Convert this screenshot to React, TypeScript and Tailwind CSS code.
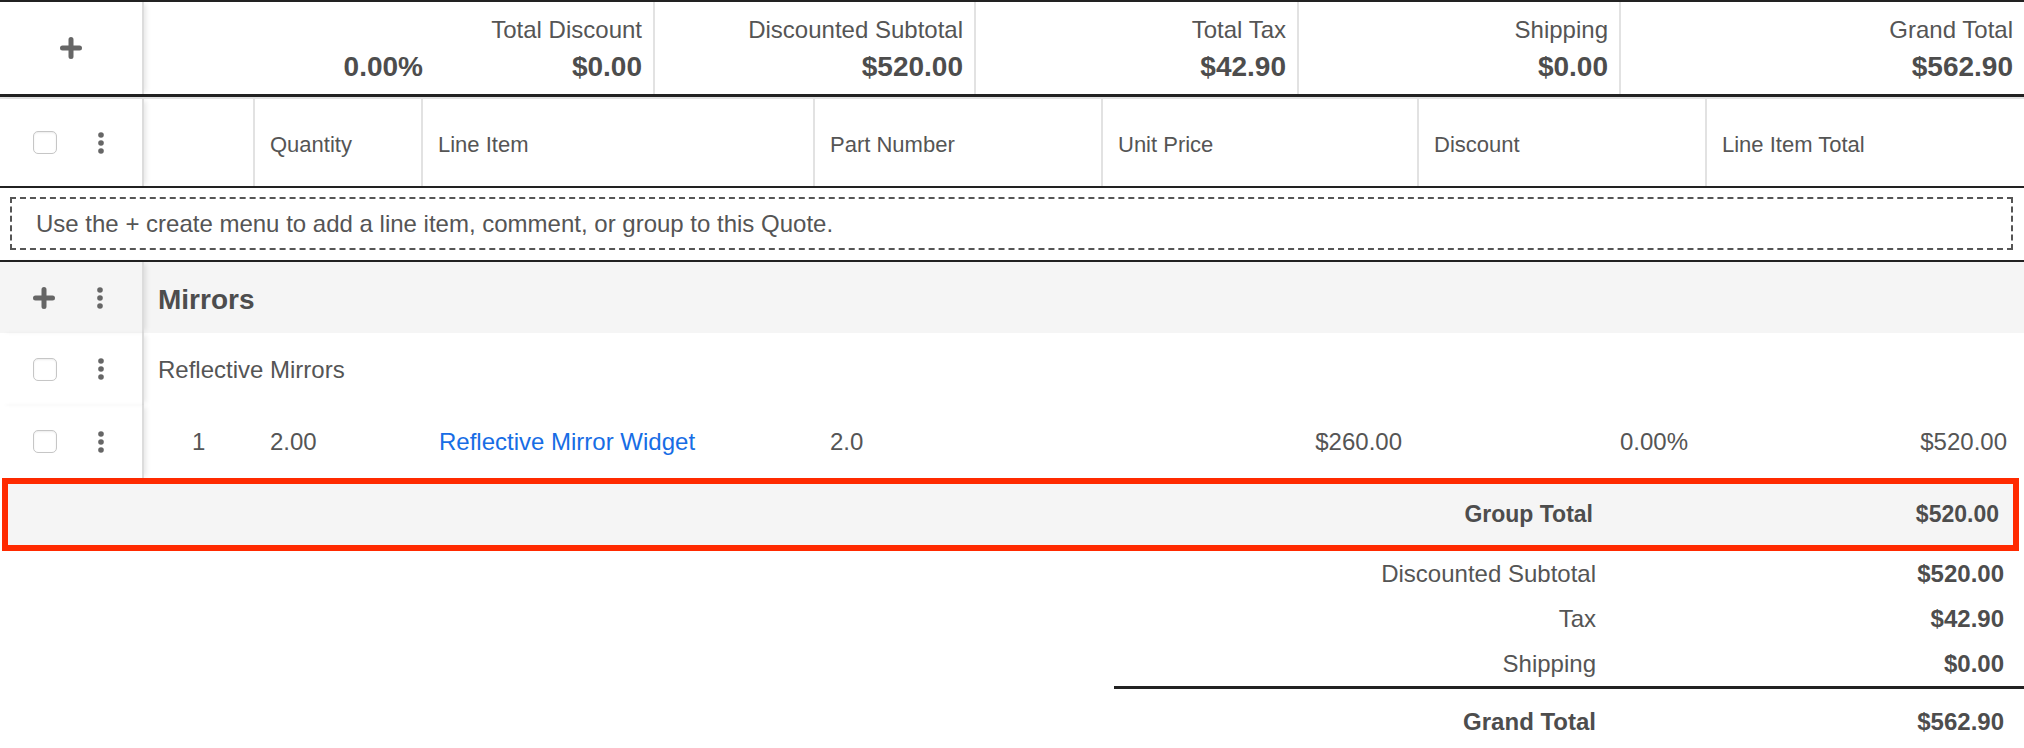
import React from 'react'

function Checkbox() {
  return (
    <span className="block w-[24px] h-[23px] rounded-[5px] border border-[#c6c6c6] bg-white shadow-[inset_0_1px_2px_rgba(0,0,0,0.08)]" />
  )
}

function Kebab() {
  return (
    <svg width="6" height="22" viewBox="0 0 6 22" className="block">
      <circle cx="3" cy="3" r="2.8" fill="#666" />
      <circle cx="3" cy="11" r="2.8" fill="#666" />
      <circle cx="3" cy="19" r="2.8" fill="#666" />
    </svg>
  )
}

function Plus() {
  return (
    <svg width="22" height="22" viewBox="0 0 22 22" className="block">
      <path d="M11 2.5v17M2.5 11h17" stroke="#666" strokeWidth="5" strokeLinecap="round" />
    </svg>
  )
}

// left column with the checkbox / menu controls
function Gutter({ children, className = '' }: { children?: React.ReactNode; className?: string }) {
  return (
    <div
      className={`relative z-10 flex w-[144px] shrink-0 items-center border-r-2 border-[#dcdcdc] shadow-[4px_0_5px_-2px_rgba(0,0,0,0.1)] ${className}`}
    >
      {children}
    </div>
  )
}

function RowControls({ plus }: { plus?: boolean }) {
  return (
    <>
      <span className="ml-[33px]">{plus ? <Plus /> : <Checkbox />}</span>
      <span className={plus ? 'ml-[42px]' : 'ml-[41px]'}>
        <Kebab />
      </span>
    </>
  )
}

const summaryCells = [
  { label: 'Discounted Subtotal', value: '$520.00', w: 'w-[321px]' },
  { label: 'Total Tax', value: '$42.90', w: 'w-[323px]' },
  { label: 'Shipping', value: '$0.00', w: 'w-[322px]' },
  { label: 'Grand Total', value: '$562.90', w: 'w-[405px]' },
]

const columns = [
  { label: '', w: 'w-[109px]' },
  { label: 'Quantity', w: 'w-[168px]' },
  { label: 'Line Item', w: 'w-[392px]' },
  { label: 'Part Number', w: 'w-[288px]' },
  { label: 'Unit Price', w: 'w-[316px]' },
  { label: 'Discount', w: 'w-[288px]' },
  { label: 'Line Item Total', w: 'w-[319px]' },
]

const totals = [
  { label: 'Discounted Subtotal', value: '$520.00' },
  { label: 'Tax', value: '$42.90' },
  { label: 'Shipping', value: '$0.00' },
]

export default function App() {
  return (
    <div className="w-[2024px] bg-white font-['Liberation_Sans',Arial,sans-serif] text-[#555]">
      {/* Quote totals header */}
      <div className="flex h-[97px] border-t-2 border-b-[3px] border-[#222]">
        <Gutter className="justify-center">
          <Plus />
        </Gutter>
        <div className="flex w-[509px] items-start pt-[13px]">
          <div className="w-[279px] pt-[35px] text-right text-[28px] font-bold leading-[34px] text-[#4d4d4d]">
            0.00%
          </div>
          <div className="flex flex-1 flex-col items-end pr-[11px]">
            <span className="text-[24px] leading-[30px]">Total Discount</span>
            <span className="mt-[5px] text-[28px] font-bold leading-[34px] text-[#4d4d4d]">$0.00</span>
          </div>
        </div>
        {summaryCells.map((c) => (
          <div
            key={c.label}
            className={`flex ${c.w} flex-col items-end border-l-2 border-[#e2e2e2] pr-[11px] pt-[13px]`}
          >
            <span className="text-[24px] leading-[30px]">{c.label}</span>
            <span className="mt-[5px] text-[28px] font-bold leading-[34px] text-[#4d4d4d]">{c.value}</span>
          </div>
        ))}
      </div>

      {/* Column headers */}
      <div className="flex h-[91px] border-t-2 border-b-2 border-t-[#e2e2e2] border-b-[#222]">
        <Gutter>
          <RowControls />
        </Gutter>
        {columns.map((c, i) => (
          <div
            key={i}
            className={`flex ${c.w} items-center pl-[15px] pt-[3px] text-[22px] ${i > 0 ? 'border-l-2 border-[#e2e2e2]' : ''}`}
          >
            {c.label}
          </div>
        ))}
      </div>

      {/* Empty state hint */}
      <div className="pb-[10px] pl-[10px] pr-[11px] pt-[9px]">
        <div className="flex h-[53px] items-center border-2 border-dashed border-[#555] pl-[24px] text-[24px]">
          Use the + create menu to add a line item, comment, or group to this Quote.
        </div>
      </div>

      {/* Group */}
      <div className="border-t-2 border-[#222]">
        <div className="flex h-[71px] bg-[#f5f5f5]">
          <Gutter>
            <RowControls plus />
          </Gutter>
          <div className="flex items-center pl-[14px] pt-[5px] text-[28px] font-bold text-[#4d4d4d]">Mirrors</div>
        </div>

        <div className="flex h-[72px]">
          <Gutter>
            <RowControls />
          </Gutter>
          <div className="flex items-center pl-[14px] pt-[2px] text-[24px]">Reflective Mirrors</div>
        </div>

        <div className="flex h-[73px] text-[24px]">
          <Gutter>
            <RowControls />
          </Gutter>
          <div className="flex w-[109px] items-center pl-[48px]">1</div>
          <div className="flex w-[168px] items-center pl-[17px]">2.00</div>
          <div className="flex w-[392px] items-center pl-[18px]">
            <a className="text-[#176de5]">Reflective Mirror Widget</a>
          </div>
          <div className="flex w-[288px] items-center pl-[17px]">2.0</div>
          <div className="flex w-[316px] items-center justify-end pr-[15px]">$260.00</div>
          <div className="flex w-[288px] items-center justify-end pr-[17px]">0.00%</div>
          <div className="flex w-[319px] items-center justify-end pr-[17px]">$520.00</div>
        </div>

        {/* Group total, highlighted */}
        <div className="ml-[2px] flex h-[73px] w-[2017px] items-center justify-end border-[6px] border-[#ff2a00] bg-[#f5f5f5] text-[23px] font-bold text-[#4d4d4d]">
          <span>Group Total</span>
          <span className="w-[420px] pr-[14px] text-right">$520.00</span>
        </div>
      </div>

      {/* Quote totals */}
      <div className="flex justify-end">
        <div className="w-[910px]">
          {totals.map((t) => (
            <div key={t.label} className="grid h-[45px] grid-cols-[482px_1fr] items-center text-[24px]">
              <span className="text-right">{t.label}</span>
              <span className="pr-[20px] text-right font-bold text-[#4d4d4d]">{t.value}</span>
            </div>
          ))}
          <div className="h-[3px] bg-[#222]" />
          <div className="grid h-[66px] grid-cols-[482px_1fr] items-center text-[24px] font-bold text-[#4d4d4d]">
            <span className="text-right">Grand Total</span>
            <span className="pr-[20px] text-right">$562.90</span>
          </div>
        </div>
      </div>
    </div>
  )
}
